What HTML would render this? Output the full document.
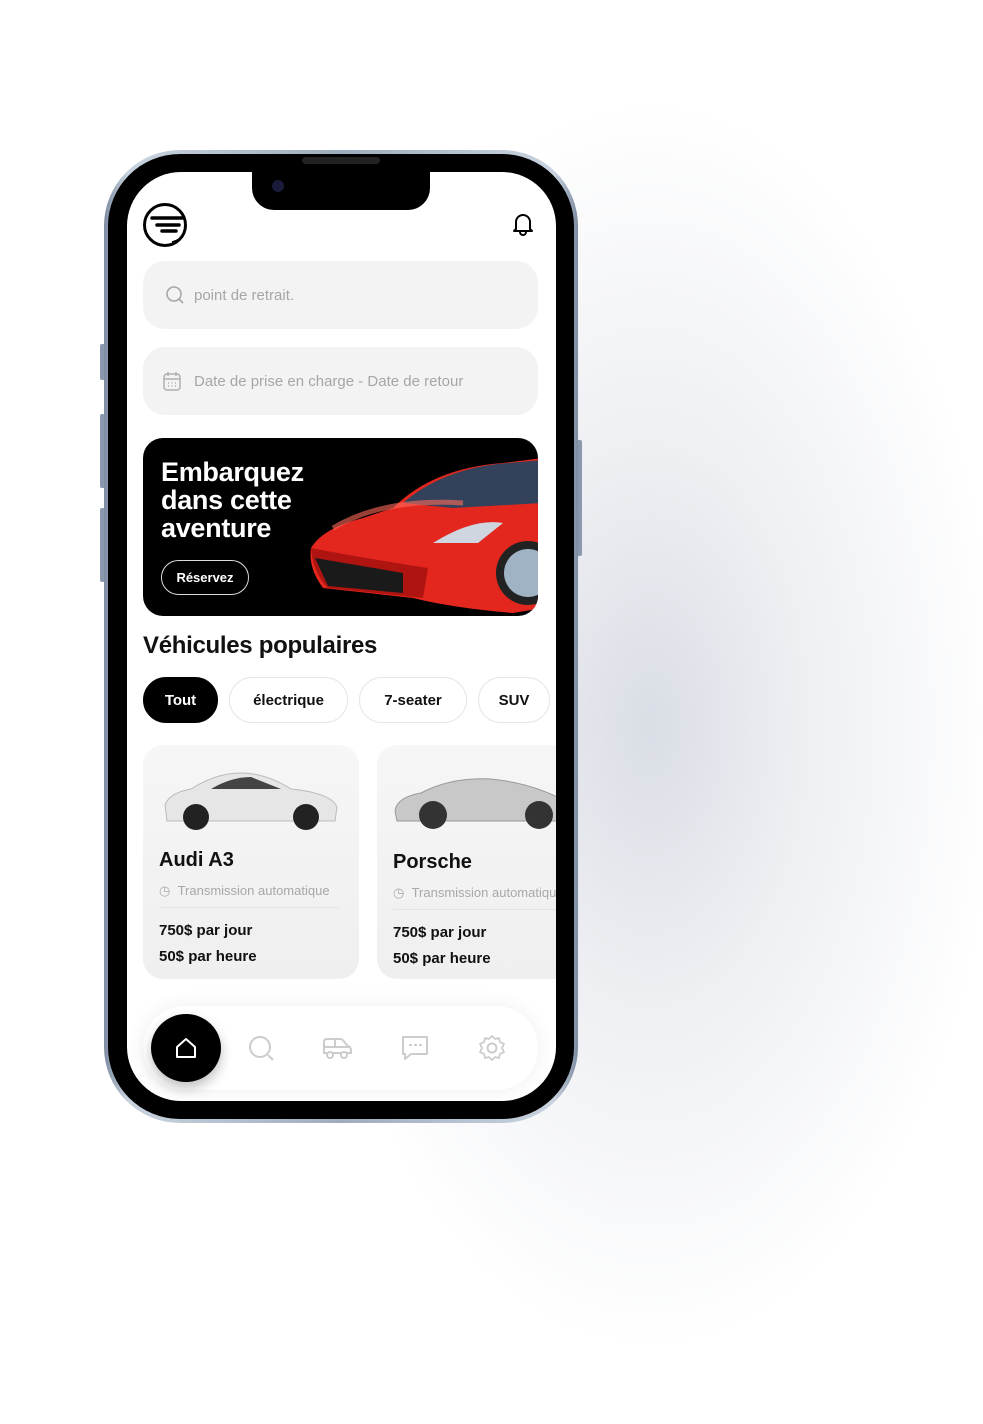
<!DOCTYPE html>
<html><head><meta charset="utf-8"><style>
*{margin:0;padding:0;box-sizing:border-box}
body{width:983px;height:1424px;background:#fff;position:relative;overflow:hidden;font-family:"Liberation Sans","DejaVu Sans",sans-serif}
.abs{position:absolute}
.shadow{left:300px;top:100px;width:700px;height:1250px;background:radial-gradient(ellipse closest-side at 50% 50%,rgba(205,210,220,.75) 0%,rgba(220,224,231,.5) 45%,rgba(255,255,255,0) 100%);}
.frame{left:104px;top:150px;width:474px;height:973px;border-radius:76px;background:linear-gradient(90deg,#7d8ca2,#c9d3df 5%,#9eacbf 50%,#c9d3df 95%,#7d8ca2);}
.black{left:108px;top:154px;width:466px;height:965px;border-radius:72px;background:#000}
.screen{left:127px;top:172px;width:429px;height:929px;border-radius:54px;background:#fff;overflow:hidden}
.btn{background:#8a99ad;width:5px;border-radius:2px}
.pill{border-radius:22px;background:#f3f3f3;color:#a6a6a6;font-size:15px;display:flex;align-items:center}
.chip{height:46px;border-radius:23px;border:1.5px solid #e6e6e6;font-weight:bold;font-size:15px;display:flex;align-items:center;justify-content:center;color:#111}
.card{border-radius:20px;background:linear-gradient(#f6f6f6,#efefef)}
.h{font-weight:bold;color:#111}
</style></head><body>
<div class="abs shadow"></div>
<div class="abs btn" style="left:100px;top:344px;height:36px"></div>
<div class="abs btn" style="left:100px;top:414px;height:74px"></div>
<div class="abs btn" style="left:100px;top:508px;height:74px"></div>
<div class="abs btn" style="left:577px;top:440px;height:116px"></div>
<div class="abs frame"></div>
<div class="abs black"></div>
<div class="abs" style="left:302px;top:157px;width:78px;height:7px;border-radius:4px;background:#222"></div>
<div class="abs screen">
  <div class="abs" style="left:125px;top:0;width:178px;height:38px;background:#000;border-radius:0 0 22px 22px"></div>
  <div class="abs" style="left:145px;top:8px;width:12px;height:12px;border-radius:50%;background:#1a1a3a"></div>
  <svg class="abs" style="left:15px;top:30px" width="48" height="48" viewBox="0 0 48 48"><circle cx="23" cy="23" r="20.5" fill="none" stroke="#000" stroke-width="3"/><path d="M10 16h30M15 23h22M20 29h14" stroke="#000" stroke-width="3.5" stroke-linecap="round"/><path d="M30 40q8-2 12-8" stroke="#000" stroke-width="1.5" fill="none"/></svg>
  <svg class="abs" style="left:385px;top:40px" width="22" height="24" viewBox="0 0 22 24"><path d="M4 17V10a7 7 0 0 1 14 0v7l2 2H2z" fill="none" stroke="#000" stroke-width="2" stroke-linejoin="round"/><path d="M8 20a3 3 0 0 0 6 0" fill="none" stroke="#000" stroke-width="2"/></svg>
  <div class="abs pill" style="left:16px;top:89px;width:395px;height:68px;padding-left:22px">
    <svg width="20" height="20" viewBox="0 0 20 20" style="margin-right:9px"><circle cx="9" cy="9" r="7" fill="none" stroke="#a6a6a6" stroke-width="1.6"/><path d="M14 14l4 4" stroke="#a6a6a6" stroke-width="1.6"/></svg>point de retrait.</div>
  <div class="abs pill" style="left:16px;top:175px;width:395px;height:68px;padding-left:19px">
    <svg width="20" height="22" viewBox="0 0 20 22" style="margin-right:12px"><rect x="2" y="4" width="16" height="16" rx="3" fill="none" stroke="#b0b0b0" stroke-width="1.5"/><path d="M2 9h16M6 2v4M14 2v4" stroke="#b0b0b0" stroke-width="1.5"/><path d="M6 13h1M9.5 13h1M13 13h1M6 16h1M9.5 16h1M13 16h1" stroke="#b0b0b0" stroke-width="1.4"/></svg>Date de prise en charge - Date de retour</div>
  <div class="abs" style="left:16px;top:266px;width:395px;height:178px;background:#000;border-radius:20px;overflow:hidden">
    <svg class="abs" style="left:160px;top:10px" width="240" height="170" viewBox="0 0 240 170">
      <path d="M90 60 Q130 20 200 15 L240 10 L240 160 L210 165 Q150 160 110 150 L20 140 Q5 120 8 100 Q20 80 60 70Z" fill="#e3271e"/>
      <path d="M100 55 Q140 20 205 15 L240 12 L240 55 L150 60Z" fill="#33425a"/>
      <path d="M8 100 Q10 125 25 140 L120 150 L125 120 Q60 110 8 100Z" fill="#b01410"/>
      <path d="M12 110 L100 125 L100 145 L25 138Z" fill="#1a1a1a"/>
      <path d="M130 95 Q170 70 200 75 L175 95Z" fill="#cfd6e0"/>
      <circle cx="225" cy="125" r="32" fill="#222"/><circle cx="225" cy="125" r="24" fill="#9fb3c4"/>
      <path d="M30 80 Q80 50 160 55" stroke="#ff6a5a" stroke-width="5" fill="none" opacity=".6"/>
    </svg>
    <div class="abs" style="left:18px;top:20px;color:#fff;font-weight:bold;font-size:27px;line-height:28px;letter-spacing:-.3px">Embarquez<br>dans cette<br>aventure</div>
    <div class="abs" style="left:18px;top:122px;width:88px;height:35px;border:1.5px solid #ddd;border-radius:18px;color:#fff;font-weight:bold;font-size:13px;display:flex;align-items:center;justify-content:center">Réservez</div>
  </div>
  <div class="abs h" style="left:16px;top:460px;font-size:24px;letter-spacing:-.3px">Véhicules populaires</div>
  <div class="abs chip" style="left:16px;top:505px;width:75px;background:#000;color:#fff;border-color:#000">Tout</div>
  <div class="abs chip" style="left:102px;top:505px;width:119px">électrique</div>
  <div class="abs chip" style="left:232px;top:505px;width:108px">7-seater</div>
  <div class="abs chip" style="left:351px;top:505px;width:72px">SUV</div>
  <div class="abs card" style="left:16px;top:573px;width:216px;height:234px">
    <svg class="abs" style="left:18px;top:22px" width="180" height="64" viewBox="0 0 180 64"><path d="M4 38 Q8 26 30 22 Q55 6 80 6 Q105 6 130 22 Q170 26 176 40 L174 54 L6 54Z" fill="#e6e6e6" stroke="#bbb"/><path d="M50 22 Q70 10 90 10 L120 22Z" fill="#444"/><circle cx="35" cy="50" r="13" fill="#222"/><circle cx="145" cy="50" r="13" fill="#222"/></svg>
    <div class="abs h" style="left:16px;top:104px;font-size:20px">Audi A3</div>
    <div class="abs" style="left:16px;top:138px;font-size:13px;color:#a8a8a8">◷ &nbsp;Transmission automatique</div>
    <div class="abs" style="left:16px;top:162px;width:180px;height:1px;background:#e4e4e4"></div>
    <div class="abs h" style="left:16px;top:173px;font-size:15px;line-height:26px">750$ par jour<br>50$ par heure</div>
  </div>
  <div class="abs card" style="left:250px;top:573px;width:200px;height:234px;border-radius:20px 0 0 20px">
    <svg class="abs" style="left:14px;top:24px" width="170" height="64" viewBox="0 0 170 64"><path d="M4 42 Q6 28 30 24 Q60 8 100 10 Q140 14 170 30 L170 52 L6 52Z" fill="#c8c8c8" stroke="#999"/><circle cx="42" cy="46" r="14" fill="#333"/><circle cx="148" cy="46" r="14" fill="#333"/></svg>
    <div class="abs h" style="left:16px;top:106px;font-size:20px">Porsche</div>
    <div class="abs" style="left:16px;top:140px;font-size:13px;color:#a8a8a8;white-space:nowrap">◷ &nbsp;Transmission automatique</div>
    <div class="abs" style="left:16px;top:164px;width:200px;height:1px;background:#e4e4e4"></div>
    <div class="abs h" style="left:16px;top:175px;font-size:15px;line-height:26px">750$ par jour<br>50$ par heure</div>
  </div>
  <div class="abs" style="left:16px;top:834px;width:395px;height:84px;border-radius:42px;background:#fff;box-shadow:0 0 20px rgba(0,0,0,.07)"></div>
  <div class="abs" style="left:24px;top:842px;width:70px;height:68px;border-radius:50%;background:#000;box-shadow:0 6px 12px rgba(0,0,0,.25)"></div>
  <svg class="abs" style="left:47px;top:864px" width="24" height="24" viewBox="0 0 24 24"><path d="M3 11L12 3l9 8v10H3z" fill="none" stroke="#fff" stroke-width="2" stroke-linejoin="round"/></svg>
  <svg class="abs" style="left:121px;top:863px" width="28" height="28" viewBox="0 0 28 28"><circle cx="12" cy="12" r="10" fill="none" stroke="#ccc" stroke-width="2"/><path d="M20 20l5 5" stroke="#ccc" stroke-width="2"/></svg>
  <svg class="abs" style="left:195px;top:864px" width="30" height="24" viewBox="0 0 30 24"><path d="M2 17V6q0-3 3-3h13q3 0 5 4l4 4q2 1 2 3v3H2z" fill="none" stroke="#ccc" stroke-width="2"/><circle cx="8" cy="19" r="3" fill="#fff" stroke="#ccc" stroke-width="2"/><circle cx="22" cy="19" r="3" fill="#fff" stroke="#ccc" stroke-width="2"/><path d="M2 11h27M13 3v8" stroke="#ccc" stroke-width="2"/></svg>
  <svg class="abs" style="left:274px;top:863px" width="28" height="26" viewBox="0 0 28 26"><path d="M2 2h24v17H10l-6 5v-5H2z" fill="none" stroke="#ccc" stroke-width="2" stroke-linejoin="round"/><path d="M9 10h1M14 10h1M19 10h1" stroke="#ccc" stroke-width="2.2" stroke-linecap="round"/></svg>
  <svg class="abs" style="left:351px;top:862px" width="28" height="28" viewBox="0 0 28 28"><circle cx="14" cy="14" r="4.5" fill="none" stroke="#ccc" stroke-width="2"/><path d="M14 2l3 3 4-1 1 4 4 2-2 4 2 4-4 2-1 4-4-1-3 3-3-3-4 1-1-4-4-2 2-4-2-4 4-2 1-4 4 1z" fill="none" stroke="#ccc" stroke-width="1.8" stroke-linejoin="round"/></svg>
</div>
</body></html>
